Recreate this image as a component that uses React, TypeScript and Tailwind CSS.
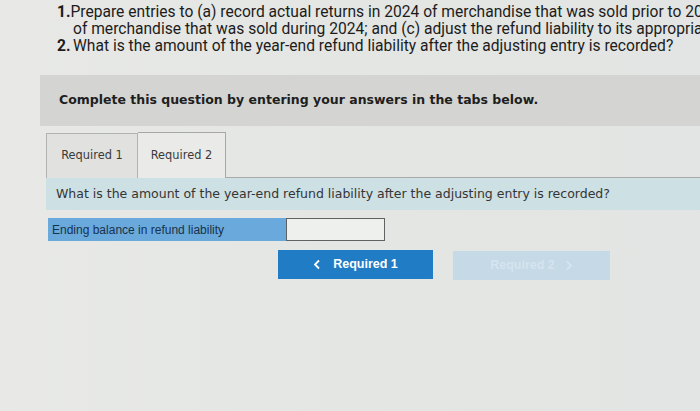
import type { FC } from 'react';

const App: FC = () => {
  return (
    <div className="h-[411px] w-[700px] overflow-hidden bg-gradient-to-r from-[#e8e9e6] via-[#e4e6e3] to-[#e2e5e3]">
      <div className="overflow-hidden whitespace-nowrap pl-[57px] pt-[4px] font-['Roboto',sans-serif] text-[15.6px] leading-[17px] text-[#1c1c1c]">
        <div className="flex">
          <span className="w-[16px] font-bold">1.</span>
          <span>Prepare entries to (a) record actual returns in 2024 of merchandise that was sold prior to 2024; (b)</span>
        </div>
        <div className="pl-[16px]">
          of merchandise that was sold during 2024; and (c) adjust the refund liability to its appropriate balance.
        </div>
        <div className="flex">
          <span className="w-[16px] font-bold">2.</span>
          <span>What is the amount of the year-end refund liability after the adjusting entry is recorded?</span>
        </div>
      </div>

      <div className="ml-[40px] mt-[20px] flex h-[51px] items-center bg-[#d4d5d2] pl-[19px] font-['DejaVu_Sans',sans-serif] text-[12.5px] font-bold text-[#1e1e1e]">
        Complete this question by entering your answers in the tabs below.
      </div>

      <div className="ml-[46px] mt-[6px] flex items-end font-['DejaVu_Sans',sans-serif] text-[11.4px] text-[#3a3a3a]">
        <div className="flex h-[45px] w-[92px] items-center justify-center border border-b-0 border-[#b2b3b0] bg-[#e1e2df]">
          Required 1
        </div>
        <div className="flex h-[46px] w-[88px] items-center justify-center border border-b-0 border-l-0 border-[#a7a8a6] bg-[#eaebe8]">
          Required 2
        </div>
        <div className="flex-1 border-b border-[#a9aba9]" />
      </div>

      <div className="ml-[46px] flex h-[32px] items-center bg-[#cde0e3] pl-[10px] font-['DejaVu_Sans',sans-serif] text-[12.5px] text-[#353535]">
        What is the amount of the year-end refund liability after the adjusting entry is recorded?
      </div>

      <div className="ml-[48px] mt-[8px] flex h-[23px]">
        <div className="flex w-[238px] items-center bg-[#6aa9dc] pl-[4px] font-['Liberation_Sans',sans-serif] text-[12px] text-[#17324d]">
          Ending balance in refund liability
        </div>
        <div className="w-[99px] border border-[#5f6263] bg-[#eef0ee]" />
      </div>

      <div className="mt-[9px] flex pl-[278px]">
        <button className="flex h-[29px] w-[155px] items-center justify-center gap-[12px] bg-[#1f7cc5] font-['Liberation_Sans',sans-serif] text-[12.5px] font-bold text-white">
          <svg width="8" height="11" viewBox="0 0 8 11" fill="none">
            <path d="M6 1.5 2 5.5l4 4" stroke="white" strokeWidth="1.8" />
          </svg>
          Required 1
        </button>
        <button className="ml-[20px] mt-[1px] flex h-[29px] w-[157px] items-center justify-center gap-[10px] bg-[#c5d9e7] font-['Liberation_Sans',sans-serif] text-[12.5px] font-bold text-[#d6e4ee]">
          Required 2
          <svg width="8" height="11" viewBox="0 0 8 11" fill="none">
            <path d="M2 1.5l4 4-4 4" stroke="#d6e4ee" strokeWidth="1.8" />
          </svg>
        </button>
      </div>
    </div>
  );
};

export default App;
